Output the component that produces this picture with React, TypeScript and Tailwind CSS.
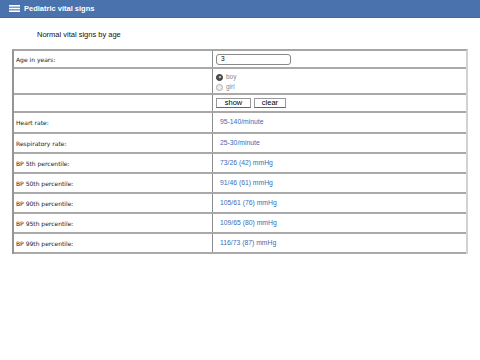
import { ReactNode } from 'react';

const valueRows: [string, string][] = [
  ['Heart rate:', '95-140/minute'],
  ['Respiratory rate:', '25-30/minute'],
  ['BP 5th percentile:', '73/26 (42) mmHg'],
  ['BP 50th percentile:', '91/46 (61) mmHg'],
  ['BP 90th percentile:', '105/61 (76) mmHg'],
  ['BP 95th percentile:', '109/65 (80) mmHg'],
  ['BP 99th percentile:', '116/73 (87) mmHg'],
];

const Row = ({
  label,
  height,
  children,
}: {
  label?: string;
  height: string;
  children: ReactNode;
}) => (
  <div className={`flex ${height} border-b-2 border-b-[#a9a9a9]`}>
    <div className="w-[199px] shrink-0 flex items-center pl-[2px] border-r border-[#8c8c8c] font-['DejaVu_Sans',Verdana,sans-serif] text-[6px] text-[#1a1a1a]">
      {label}
    </div>
    <div className="flex-1 flex items-center pl-[3px]">{children}</div>
  </div>
);

const App = () => {
  return (
    <div className="w-[480px] h-[360px] bg-white font-['Liberation_Sans',Arial,sans-serif]">
      <header className="h-[18px] bg-[#4a73ae] border-b border-[#42699f] flex items-center pl-[9px] gap-[4px]">
        <svg width="11" height="7" viewBox="0 0 11 7">
          <rect x="0" y="0" width="11" height="1.6" fill="#fff" />
          <rect x="0" y="2.7" width="11" height="1.6" fill="#fff" />
          <rect x="0" y="5.4" width="11" height="1.6" fill="#fff" />
        </svg>
        <span className="text-white font-bold text-[7.5px]">Pediatric vital signs</span>
      </header>
      <p className="mt-[12px] ml-[37px] text-[7.5px] leading-[10px] text-[#111]">Normal vital signs by age</p>
      <div className="mt-[9px] mx-[12px] border-l-2 border-t-2 border-l-[#959595] border-t-[#a6a6a6] border-r-2 border-r-[#d2d2d2]">
        <Row label="Age in years:" height="h-[18px]">
          <div className="w-[75px] h-[11px] border border-[#888] rounded-[3px] flex items-center pl-[4px] text-[6.5px] text-black">
            3
          </div>
        </Row>
        <Row height="h-[26px]">
          <div className="flex flex-col gap-[2px] pt-[2px] text-[6.5px] text-[#888]">
            <label className="flex items-center gap-[3px] leading-[8px]">
              <span className="w-[7px] h-[7px] rounded-full bg-[#555] border border-[#333] flex items-center justify-center">
                <span className="w-[2px] h-[2px] rounded-full bg-[#ddd]" />
              </span>
              boy
            </label>
            <label className="flex items-center gap-[3px] leading-[8px]">
              <span className="w-[7px] h-[7px] rounded-full bg-[#eee] border border-[#aaa]" />
              girl
            </label>
          </div>
        </Row>
        <Row height="h-[18px]">
          <div className="flex gap-[3px] text-[7.5px] text-black">
            <button className="w-[35px] h-[10px] border border-[#999] border-b-[#666] bg-white leading-none">show</button>
            <button className="w-[32px] h-[10px] border border-[#999] border-b-[#666] bg-white leading-none">clear</button>
          </div>
        </Row>
        {valueRows.map(([label, value], i) => (
          <Row key={label} label={label} height={i === 0 ? 'h-[21px]' : 'h-[20px]'}>
            <span className="pl-[4px] text-[6.8px] text-[#3b6cb5]">{value}</span>
          </Row>
        ))}
      </div>
    </div>
  );
};

export default App;
